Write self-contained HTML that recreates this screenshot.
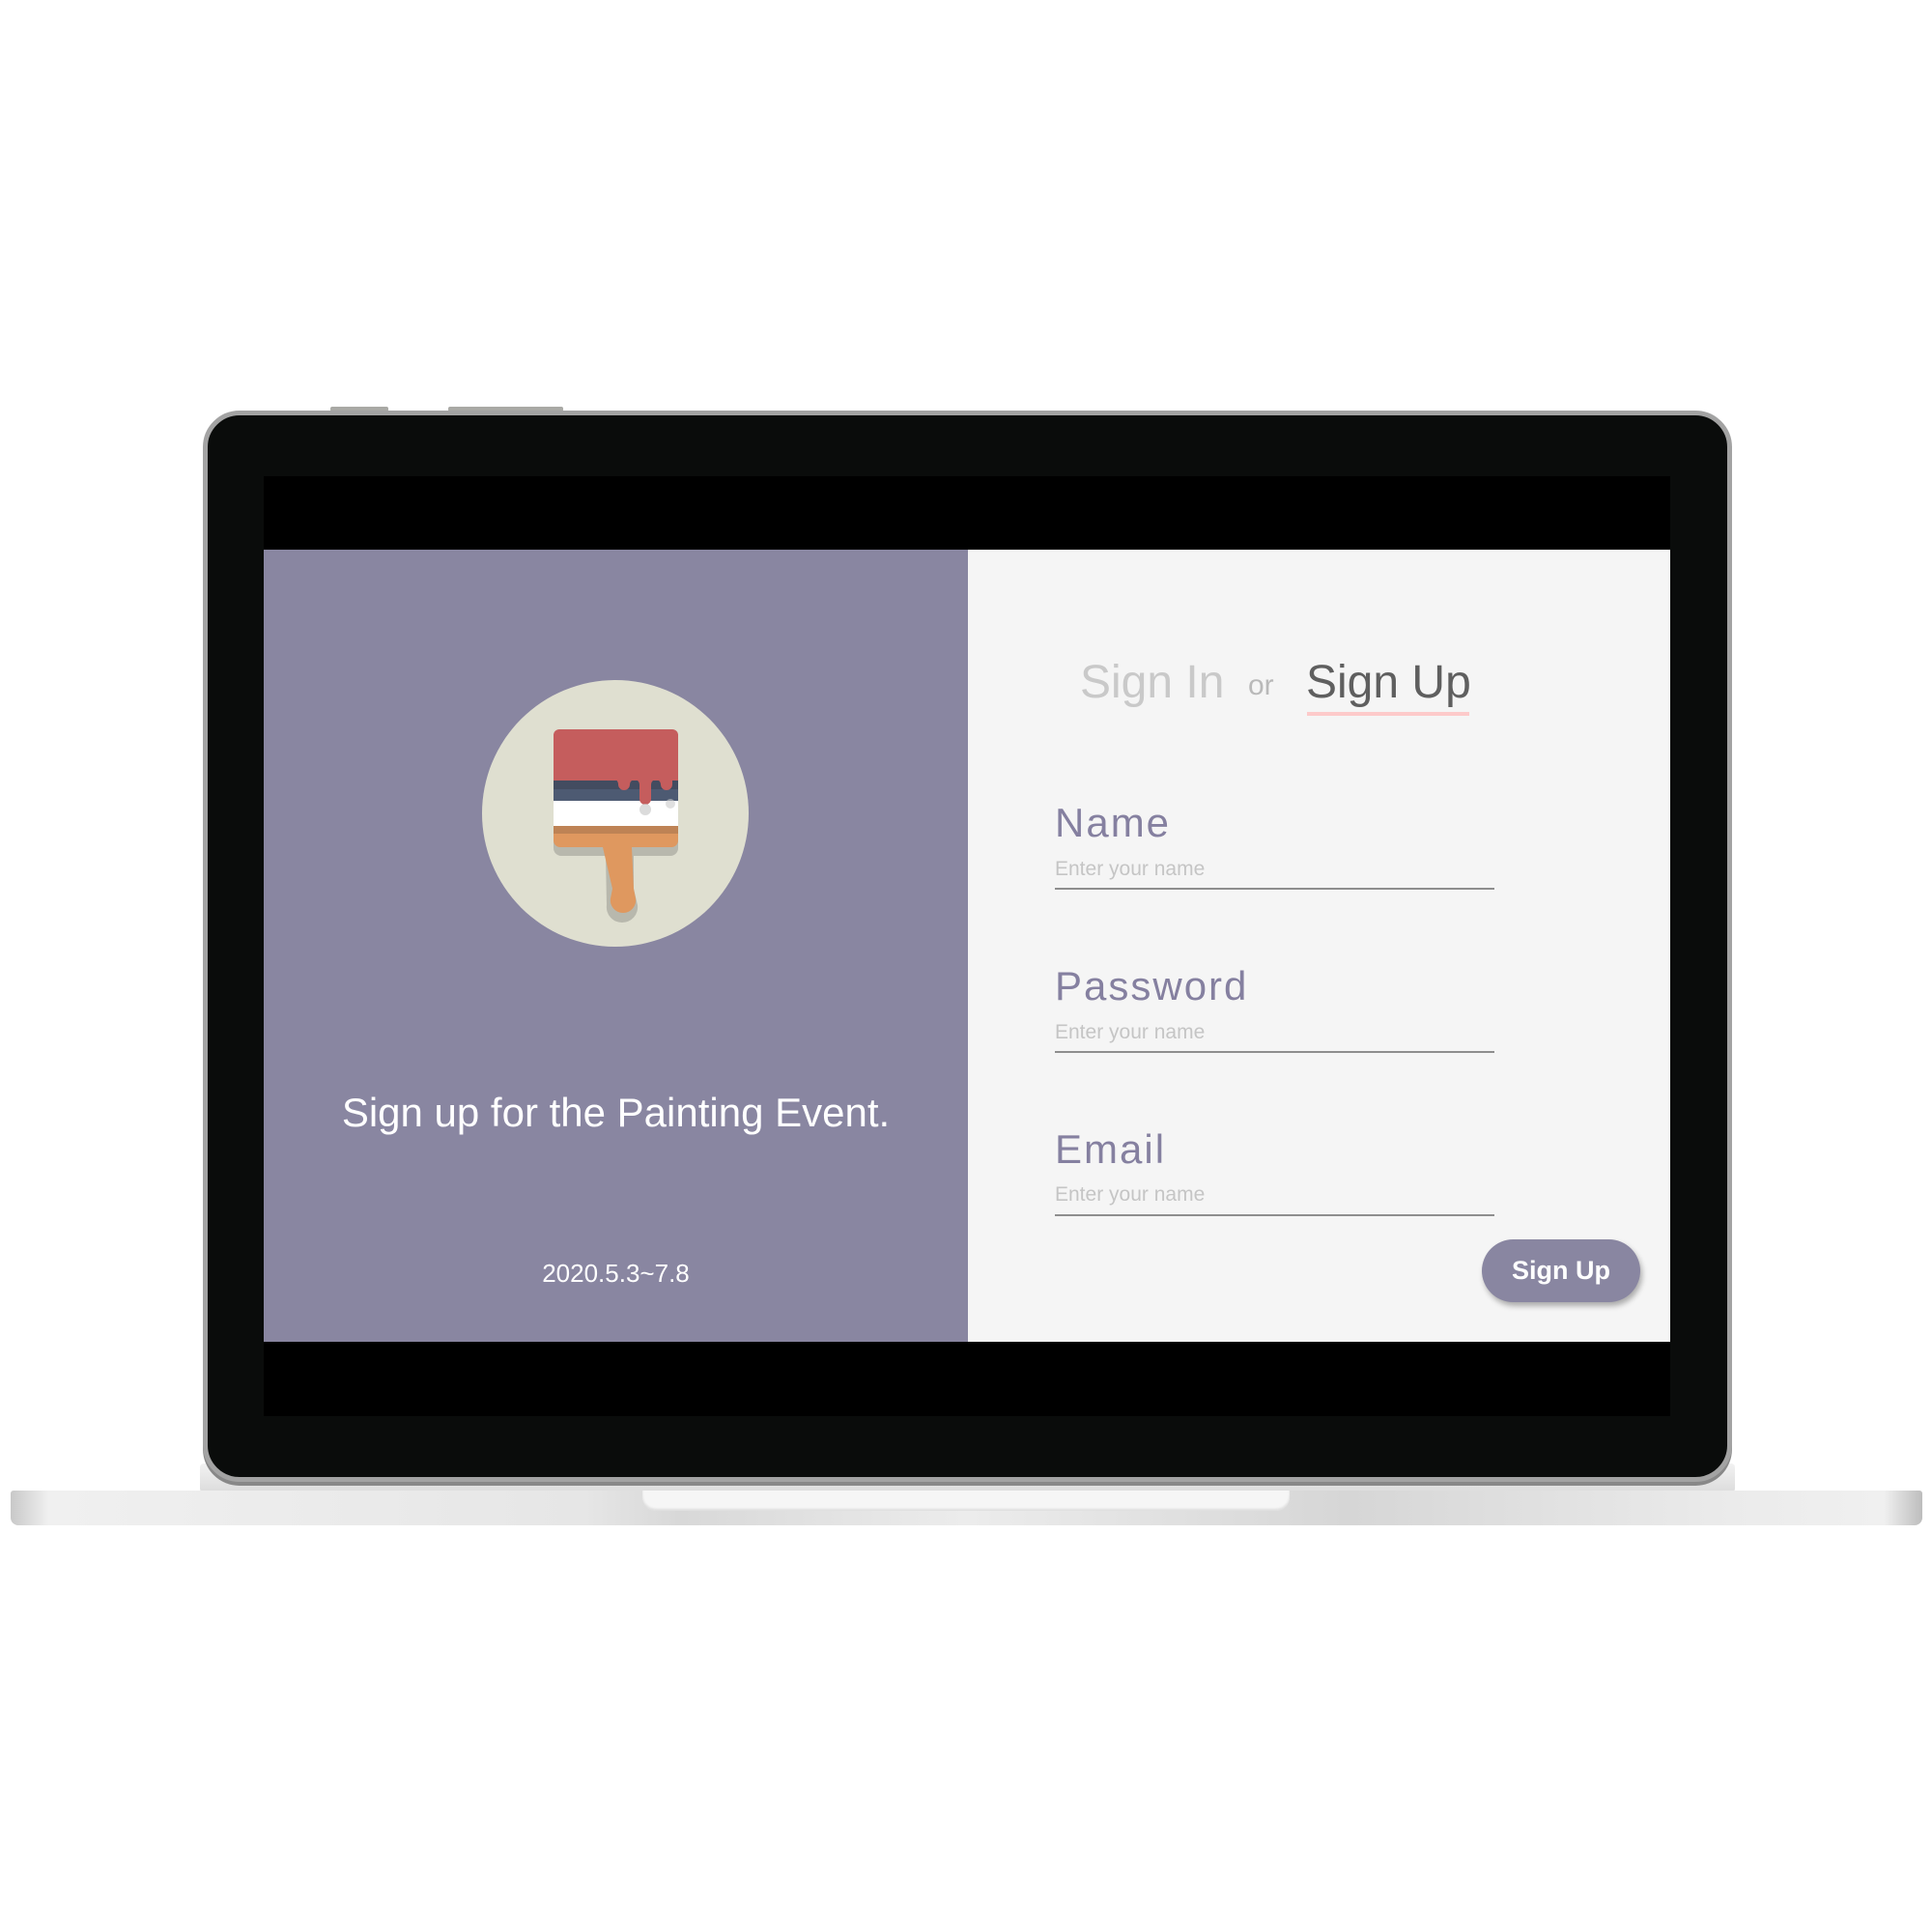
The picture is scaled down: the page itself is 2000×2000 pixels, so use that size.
<!DOCTYPE html>
<html><head><meta charset="utf-8"><style>
*{margin:0;padding:0;box-sizing:border-box}
body{width:2000px;height:2000px;background:#fff;position:relative;overflow:hidden;font-family:"Liberation Sans",sans-serif}
.a{position:absolute}
.t{position:absolute;white-space:nowrap;line-height:1}
</style></head><body>
<div class="a" style="left:342px;top:421px;width:60px;height:5px;background:#a9a9a5;border-radius:2px"></div>
<div class="a" style="left:464px;top:421px;width:119px;height:5px;background:#a9a9a5;border-radius:2px"></div>
<div class="a" style="left:207px;top:1515px;width:1589px;height:30px;background:linear-gradient(#f2f2f2,#dcdcdc);border-radius:4px"></div>
<div class="a" style="left:11px;top:1543px;width:1979px;height:36px;border-radius:3px 3px 8px 8px;background:linear-gradient(90deg,#c8c8c8 0%,#f0f0f0 2%,#e6e6e6 30%,#d8d8d8 35%,#ececec 50%,#d6d6d6 70%,#ebebeb 90%,#f0f0f0 98%,#bdbdbd 100%)"></div>
<div class="a" style="left:665px;top:1543px;width:670px;height:21px;background:#f6f6f6;border-radius:0 0 14px 14px;box-shadow:inset 0 -2px 2px #ddd"></div>
<div class="a" style="left:210px;top:425px;width:1583px;height:1109px;background:#0a0c0b;border:5px solid #a3a3a3;border-radius:38px;box-shadow:0 4px 0 #888"></div>
<div class="a" style="left:273px;top:493px;width:1456px;height:973px;background:#000"></div>
<div class="a" style="left:273px;top:569px;width:729px;height:820px;background:#8986a1"></div>
<div class="a" style="left:1002px;top:569px;width:727px;height:820px;background:#f5f5f5"></div>
<div class="a" style="left:499px;top:704px;width:276px;height:276px;border-radius:50%;background:#dfdfd0"></div>
<svg class="a" style="left:0;top:0" width="2000" height="2000">
  <path d="M573 870 H702 V878 a8 8 0 0 1 -8 8 H656 V920 L660 937 a16 16 0 0 1 -16 18 a16 16 0 0 1 -16 -18 L627 886 H581 a8 8 0 0 1 -8 -8 Z" fill="#b8b8ad"/>
  <rect x="573" y="755" width="129" height="110" rx="6" fill="#c55d5d"/>
  <rect x="573" y="808" width="129" height="21" fill="#4d5a72"/>
  <rect x="573" y="808" width="129" height="9" fill="#434c60"/>
  <rect x="573" y="829" width="129" height="26" fill="#fff"/>
  <rect x="573" y="855" width="129" height="8" fill="#be8355"/>
  <path d="M573 863 H702 V870 a7 7 0 0 1 -7 7 H654 L656 920 L658 930 a13 13 0 0 1 -13 15 a13 13 0 0 1 -13 -15 L634 920 L624 877 H580 a7 7 0 0 1 -7 -7 Z" fill="#df985f"/>
  <path d="M573 806 H634 a6 6 0 0 1 6 6 a6 6 0 0 0 12 0 a5 5 0 0 1 10 0 V827 a6 6 0 0 0 12 0 V812 a5 5 0 0 1 10 0 a6 6 0 0 0 12 0 V806 H702 V808 H573Z" fill="#c55d5d"/>
  <circle cx="668" cy="838" r="6" fill="#ccc" opacity=".7"/>
  <circle cx="694" cy="832" r="5" fill="#ccc" opacity=".6"/>
</svg>
<div class="t" style="left:273px;width:729px;top:1131px;text-align:center;color:#fff;font-size:42px">Sign up for the Painting Event.</div>
<div class="t" style="left:273px;width:729px;top:1305px;text-align:center;color:#fff;font-size:26px">2020.5.3~7.8</div>
<div class="t" style="left:1118px;top:683px;font-size:48px;color:#c9c9c9">Sign In</div>
<div class="t" style="left:1292px;top:695px;font-size:30px;color:#b9b9b9">or</div>
<div class="t" style="left:1352px;top:683px;font-size:48px;color:#5f5f5f">Sign Up</div>
<div class="a" style="left:1353px;top:737px;width:168px;height:4px;background:#fdcaca"></div>

<div class="t" style="left:1092px;top:831px;font-size:42px;color:#8580a0;letter-spacing:2px">Name</div>
<div class="t" style="left:1092px;top:889px;font-size:21px;color:#c5c5c5">Enter your name</div>
<div class="a" style="left:1092px;top:919px;width:455px;height:2px;background:#8e8e8e"></div>

<div class="t" style="left:1092px;top:1000px;font-size:42px;color:#8580a0;letter-spacing:2px">Password</div>
<div class="t" style="left:1092px;top:1058px;font-size:21px;color:#c5c5c5">Enter your name</div>
<div class="a" style="left:1092px;top:1088px;width:455px;height:2px;background:#8e8e8e"></div>

<div class="t" style="left:1092px;top:1169px;font-size:42px;color:#8580a0;letter-spacing:2px">Email</div>
<div class="t" style="left:1092px;top:1226px;font-size:21px;color:#c5c5c5">Enter your name</div>
<div class="a" style="left:1092px;top:1257px;width:455px;height:2px;background:#8e8e8e"></div>

<div class="a" style="left:1534px;top:1283px;width:164px;height:65px;border-radius:33px;background:#8986a1;box-shadow:2px 4px 6px rgba(0,0,0,.3);color:#fff;font-size:27px;font-weight:bold;text-align:center;line-height:65px">Sign Up</div>
</body></html>
